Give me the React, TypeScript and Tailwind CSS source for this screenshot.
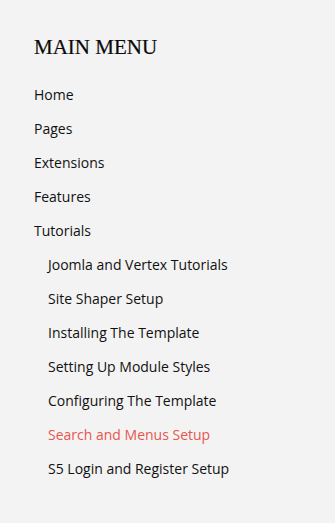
export default function App() {
  const top = ["Home", "Pages", "Extensions", "Features", "Tutorials"];
  const sub = [
    "Joomla and Vertex Tutorials",
    "Site Shaper Setup",
    "Installing The Template",
    "Setting Up Module Styles",
    "Configuring The Template",
    "Search and Menus Setup",
    "S5 Login and Register Setup",
  ];
  return (
    <div className="w-[335px] h-[523px] bg-[#f3f3f3] pl-[34px] pt-[34px]">
      <h3 className="text-[21px] leading-[26px] text-[#0a0a0a] font-['Liberation_Serif',serif] [-webkit-text-stroke:0.2px_#0a0a0a]">MAIN MENU</h3>
      <ul className="mt-[25px] font-['Open_Sans',sans-serif] text-[14px] leading-[20px] text-[#111] flex flex-col gap-[14px]">
        {top.map((t) => (
          <li key={t}>{t}</li>
        ))}
        {sub.map((t) => (
          <li key={t} className={"pl-[14px] " + (t === "Search and Menus Setup" ? "text-[#e8554e]" : "")}>
            {t}
          </li>
        ))}
      </ul>
    </div>
  );
}
